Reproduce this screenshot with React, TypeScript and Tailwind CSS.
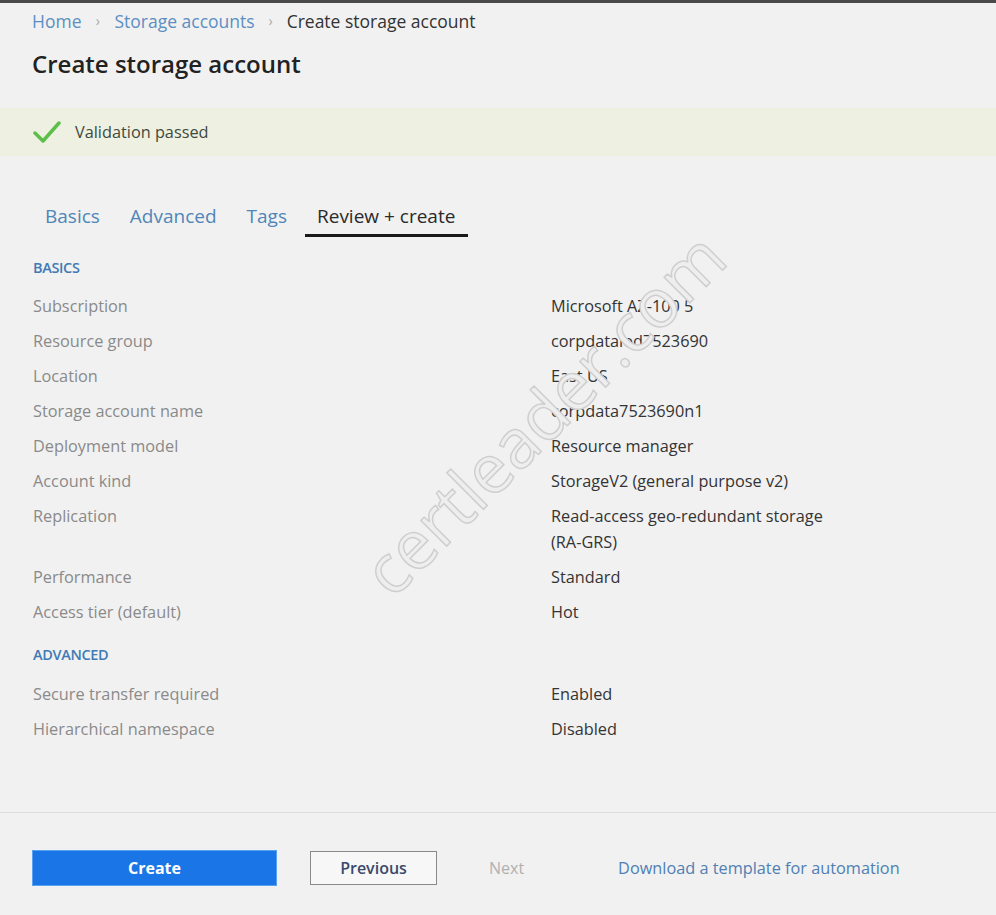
import React from "react";

const font = { fontFamily: '"Open Sans", "Noto Sans", sans-serif' };

const basics: [string, string[]][] = [
  ["Subscription", ["Microsoft AZ-100 5"]],
  ["Resource group", ["corpdatalod7523690"]],
  ["Location", ["East US"]],
  ["Storage account name", ["corpdata7523690n1"]],
  ["Deployment model", ["Resource manager"]],
  ["Account kind", ["StorageV2 (general purpose v2)"]],
  ["Replication", ["Read-access geo-redundant storage", "(RA-GRS)"]],
  ["Performance", ["Standard"]],
  ["Access tier (default)", ["Hot"]],
];

const advanced: [string, string[]][] = [
  ["Secure transfer required", ["Enabled"]],
  ["Hierarchical namespace", ["Disabled"]],
];

function Row({ label, value }: { label: string; value: string[] }) {
  return (
    <div className="flex">
      <div className="w-[518px] shrink-0 text-[16.3px] leading-[26px] text-[#8a8a8a]">{label}</div>
      <div className="text-[16.3px] leading-[26px] text-[#343434]">
        {value.map((v, i) => (
          <div key={i}>{v}</div>
        ))}
      </div>
    </div>
  );
}

export default function App() {
  return (
    <div
      className="relative w-[996px] h-[915px] overflow-hidden bg-[#f1f1f1] border-t-[3px] border-[#4a4a4a]"
      style={font}
    >
      {/* Breadcrumb */}
      <div className="flex items-center pl-[32px] pt-[6px] text-[17.5px] leading-[24px]">
        <span className="text-[#5b8fc2]">Home</span>
        <span className="text-[#a8a8a8] text-[14px] w-[33px] text-center">›</span>
        <span className="text-[#5b8fc2]">Storage accounts</span>
        <span className="text-[#a8a8a8] text-[14px] w-[32px] text-center">›</span>
        <span className="text-[#333]">Create storage account</span>
      </div>

      {/* Title */}
      <div className="pl-[32px] mt-[15px] text-[24px] leading-[32px] font-semibold text-[#222]">
        Create storage account
      </div>

      {/* Validation */}
      <div className="mt-[28px] h-[48px] bg-[#eef1e1] flex items-center pl-[33px] gap-[14px]">
        <svg width="28" height="24" viewBox="0 0 28 24">
          <path d="M2 13 L10 21 L26 3" fill="none" stroke="#5cbf4a" strokeWidth="3.5" strokeLinecap="round" strokeLinejoin="round" />
        </svg>
        <span className="text-[16.3px] text-[#3e4a3e]">Validation passed</span>
      </div>

      {/* Tabs */}
      <div className="flex items-end pl-[33px] mt-[47px] text-[19px] leading-[26px]">
        <div className="pl-[12px] pr-[12px] pb-[5px] border-b-[3px] border-transparent text-[#4f86b8]">Basics</div>
        <div className="pl-[12px] pr-[12px] pb-[5px] ml-[6px] border-b-[3px] border-transparent text-[#4f86b8]">Advanced</div>
        <div className="pl-[12px] pr-[12px] pb-[5px] ml-[6px] border-b-[3px] border-transparent text-[#4f86b8]">Tags</div>
        <div className="pl-[12px] pr-[13px] pb-[5px] ml-[6px] text-[#2a2a2a] border-b-[3px] border-[#1a1a1a]">Review + create</div>
      </div>

      {/* Content */}
      <div className="pl-[33px] mt-[21px]">
        <div className="text-[14.5px] leading-[20px] font-semibold text-[#3f7ab5] tracking-tight mb-[15px]">BASICS</div>
        <div className="flex flex-col gap-[9px]">
          {basics.map(([l, v]) => (
            <Row key={l} label={l} value={v} />
          ))}
        </div>
        <div className="text-[14.5px] leading-[20px] font-semibold text-[#3f7ab5] tracking-tight mt-[20px] mb-[16px]">ADVANCED</div>
        <div className="flex flex-col gap-[9px]">
          {advanced.map(([l, v]) => (
            <Row key={l} label={l} value={v} />
          ))}
        </div>
      </div>

      {/* Footer */}
      <div className="absolute left-0 right-0 top-[809px] border-t border-[#dcdcdc]" />
      <div className="absolute left-[33px] top-[848px] flex items-center">
        <button className="w-[243px] h-[34px] bg-[#1a76e6] text-white font-bold text-[16px] shadow-[0_0_0_1px_#5aa0f0]">
          Create
        </button>
        <button className="ml-[34px] w-[127px] h-[34px] border border-[#8a8a8a] bg-[#f7f7f7] text-[#3a4a6a] font-semibold text-[16px]">
          Previous
        </button>
        <span className="ml-[52px] text-[16px] text-[#b0b0b0]">Next</span>
        <span className="ml-[94px] text-[16.3px] text-[#4f7fb3]">Download a template for automation</span>
      </div>

      {/* Watermark */}
      <div className="pointer-events-none absolute left-[543px] top-[410px] -translate-x-1/2 -translate-y-1/2 -rotate-45 text-[68px] text-[#eeeeee] [-webkit-text-stroke:1.5px_#cfcfcf] whitespace-nowrap">
        certleader.com
      </div>
    </div>
  );
}
